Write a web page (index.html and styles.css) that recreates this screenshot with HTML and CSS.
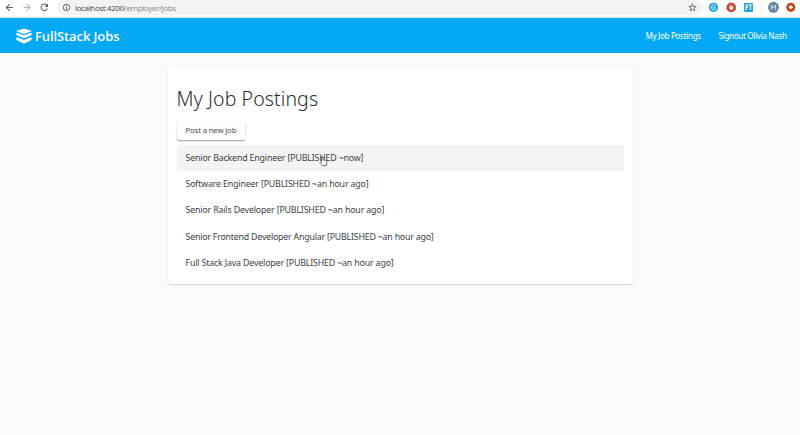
FILE: index.html
```html
<!DOCTYPE html>
<html lang="en">
<head>
<meta charset="utf-8">
<title>FullStack Jobs</title>
<link rel="stylesheet" href="styles.css">
</head>
<body>
<div class="browser">
  <svg class="nav-icons" width="56" height="15" viewBox="0 0 56 15" fill="none" stroke-width="1.1">
    <path stroke="#5f6368" d="M13 7.500H6.500M9.700 4.200 6.400 7.500l3.300 3.300"/>
    <path stroke="#b4b7ba" d="M23.500 7.500H30M26.800 4.200l3.300 3.300-3.300 3.300"/>
    <path stroke="#5f6368" d="M47 5.200A3.300 3.300 0 1 0 47.500 8.600"/>
    <path fill="#5f6368" d="M48 3.500v3.400h-3.400z"/>
  </svg>
  <div class="address">
    <svg width="9" height="9" viewBox="0 0 9 9" fill="none" stroke="#5f6368"><circle cx="4.500" cy="4.500" r="3.200"/><path d="M4.500 4v2.400M4.500 2.500v.9"/></svg>
    <span class="url"><b>localhost</b><i>:</i><b>4200</b>/employer/jobs</span>
    <svg class="star" width="9" height="9" viewBox="0 0 9 9" fill="none" stroke="#5f6368" stroke-width=".9"><path d="m4.500.9 1 2.400 2.600.2-2 1.700.6 2.600-2.200-1.400-2.200 1.400.6-2.600-2-1.700 2.600-.2z"/></svg>
  </div>
  <svg class="extensions" width="98" height="15" viewBox="0 0 98 15">
    <circle cx="11.500" cy="7.300" r="4.600" fill="#1b9fe8"/>
    <path d="M13.500 5.500A2.500 2.500 0 1 0 14 8.200M10.500 7.300l1 1 2-2.200" fill="none" stroke="#d9f1ff"/>
    <path d="M27.300 2.700h3.800l2.700 2.700v3.800l-2.700 2.700h-3.800l-2.700-2.700V5.400z" fill="#c4472b"/>
    <path d="M27.800 7.500V5.500M29 7V4.500M30.200 7V5M27.800 7h3v1.500l-.8 1.200h-1.400l-.8-1.200z" stroke="#fff" stroke-width=".6" fill="#fff"/>
    <rect x="42" y="3" width="9" height="9" rx="1" fill="#29a4e2"/>
    <path d="M44 10V5h2.700M44 7.400h2.200M47 5h3M48.500 5v5" fill="none" stroke="#fff"/>
    <path d="M60.500 4v8" stroke="#ebedef"/>
    <circle cx="71.500" cy="7.300" r="5.500" fill="#6888a2"/>
    <path d="M69.400 9.800V5l2.100 3.200L73.600 5v4.800" fill="none" stroke="#e7edf2" stroke-width=".8"/>
    <circle cx="88.800" cy="7.300" r="4.600" fill="#c8441f"/>
    <path d="m88.800 5 2.300 2.300-2.300 2.300-2.300-2.300z" fill="#fff"/>
  </svg>
</div>
<header class="toolbar">
  <svg width="18" height="16" viewBox="0 0 18 16" fill="#fff">
    <path d="M9 .4 17 3 9 5.900 1 3z"/>
    <path d="M.4 5.500 2.800 4.900 9 7.300l6.200-2.400 2.400.6-2.300 2.200L9 10.300 2.700 7.700z"/>
    <path d="M.4 10.300l2.400-.9L9 12l6.200-2.600 2.400.9-2.300 2.500L9 15.400l-6.300-2.600z"/>
  </svg>
  <span class="brand">FullStack Jobs</span>
  <nav class="links"><a class="postings">My Job Postings</a><a class="signout">Signout Olivia Nash</a></nav>
</header>
<main class="card">
  <h1 class="title">My Job Postings</h1>
  <button class="new-job">Post a new job</button>
  <ul class="jobs">
    <li class="job hovered"><span>Senior Backend Engineer [PUBLISHED ~now]</span>
      <svg class="pointer" width="9" height="12" viewBox="0 0 9 12"><path d="M2.500 7V1.400q.7-.9 1.300 0v3.400l3.500.8q.8.400.7 1.300l-.7 3.800H3.700L1 7.500q.2-1 1.500-.5z" fill="#fff" stroke="#4b4b50" stroke-width=".8"/></svg>
    </li>
    <li class="job"><span>Software Engineer [PUBLISHED ~an hour ago]</span></li>
    <li class="job"><span>Senior Rails Developer [PUBLISHED ~an hour ago]</span></li>
    <li class="job wide"><span>Senior Frontend Developer Angular [PUBLISHED ~an hour ago]</span></li>
    <li class="job"><span>Full Stack Java Developer [PUBLISHED ~an hour ago]</span></li>
  </ul>
</main>
</body>
</html>
```
FILE: styles.css
```css
* { box-sizing: border-box; }
body { margin: 0; height: 435px; overflow: hidden; background: #fafafa; font-family: "Noto Sans", sans-serif; color: #3b3d45; }
svg { display: block; flex: none; }
.browser { display: flex; height: 18px; background: #fff; border-bottom: 1px solid #dcdddf; }
.address { display: flex; align-items: center; width: 645px; height: 15px; margin-left: 1px; padding: 0 5px; border-radius: 8px; background: #f1f3f4; }
.url { margin-left: 4px; font: 8px/14px "Open Sans", sans-serif; letter-spacing: -0.36px; color: #85898d; white-space: nowrap; }
.url b { font-weight: 400; color: #45494d; }
.url i { font-style: normal; }
.star { margin-left: auto; }
.toolbar { display: flex; align-items: center; height: 35px; padding: 0 14px 0 15px; background: #03a9f4; color: #fff; }
.brand { margin-left: 2px; font: 600 13px/18px "Open Sans", sans-serif; letter-spacing: -0.1px; white-space: nowrap; }
.links { display: flex; gap: 17px; margin-left: auto; font-size: 8px; line-height: 12px; letter-spacing: -0.28px; white-space: nowrap; }
.postings { width: 56px; }
.signout { width: 67.500px; }
.card { width: 465px; height: 218px; margin: 13px 0 0 167.500px; padding: 20px 9px 0; border-radius: 3px; background: #fff; box-shadow: 0 1px 1px rgba(0,0,0,.13), 0 0 2px rgba(0,0,0,.08); }
.title { margin: 0; font-size: 19.500px; line-height: 26px; font-weight: 350; letter-spacing: 0.1px; color: #2c2d33; white-space: nowrap; }
.new-job { display: block; width: 68px; height: 19px; margin: 9px 0 5px; padding: 0 0 1px 9px; border: 0; border-radius: 2px; background: #fff; color: #4a4c52; font: 7.800px/18px "Noto Sans", sans-serif; letter-spacing: -0.17px; text-align: left; white-space: nowrap; box-shadow: 0 1px 1.500px rgba(0,0,0,.4); }
.jobs { margin: 0; padding: 0; list-style: none; }
.job { display: flex; align-items: center; position: relative; height: 26.200px; padding-left: 9px; font-size: 8.800px; line-height: 14px; letter-spacing: -0.155px; white-space: nowrap; }
.wide { letter-spacing: -0.2px; }
.hovered { background: #f4f4f4; }
.pointer { position: absolute; left: 142px; top: 10px; }
```
